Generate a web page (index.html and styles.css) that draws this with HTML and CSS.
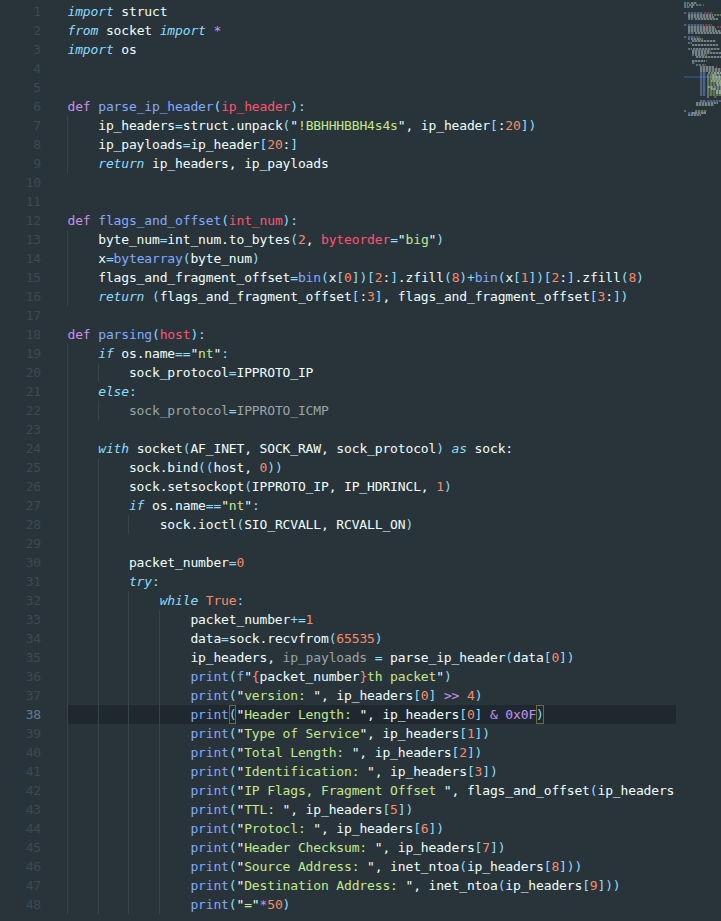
FILE: index.html
```html
<!DOCTYPE html>
<html lang="en">
<head>
<meta charset="utf-8">
<title>parser.py</title>
<link rel="stylesheet" href="styles.css">
</head>
<body>
<div class="editor">
<div class="lines">
<div class="line"><span class="num">1</span><div class="code"><span class="t"><span class="k">import</span> struct</span></div></div>
<div class="line"><span class="num">2</span><div class="code"><span class="t"><span class="k">from</span> socket <span class="k">import</span> <span class="d">*</span></span></div></div>
<div class="line"><span class="num">3</span><div class="code"><span class="t"><span class="k">import</span> os</span></div></div>
<div class="line"><span class="num">4</span><div class="code"></div></div>
<div class="line"><span class="num">5</span><div class="code"></div></div>
<div class="line"><span class="num">6</span><div class="code"><span class="t"><span class="d">def</span> <span class="f">parse_ip_header</span><span class="o">(</span><span class="r">ip_header</span><span class="o">):</span></span></div></div>
<div class="line"><span class="num">7</span><div class="code"><i class="g"></i><span class="t">ip_headers<span class="o">=</span>struct.unpack<span class="o">(</span>"<span class="s">!BBHHHBBH4s4s</span>", ip_header<span class="o">[</span>:<span class="n">20</span><span class="o">])</span></span></div></div>
<div class="line"><span class="num">8</span><div class="code"><i class="g"></i><span class="t">ip_payloads<span class="o">=</span>ip_header<span class="o">[</span><span class="n">20</span>:<span class="o">]</span></span></div></div>
<div class="line"><span class="num">9</span><div class="code"><i class="g"></i><span class="t"><span class="k">return</span> ip_headers, ip_payloads</span></div></div>
<div class="line"><span class="num">10</span><div class="code"></div></div>
<div class="line"><span class="num">11</span><div class="code"></div></div>
<div class="line"><span class="num">12</span><div class="code"><span class="t"><span class="d">def</span> <span class="f">flags_and_offset</span><span class="o">(</span><span class="r">int_num</span><span class="o">):</span></span></div></div>
<div class="line"><span class="num">13</span><div class="code"><i class="g"></i><span class="t">byte_num<span class="o">=</span>int_num.to_bytes<span class="o">(</span><span class="n">2</span>, <span class="r">byteorder</span><span class="o">=</span>"<span class="s">big</span>"<span class="o">)</span></span></div></div>
<div class="line"><span class="num">14</span><div class="code"><i class="g"></i><span class="t">x<span class="o">=</span><span class="f">bytearray</span><span class="o">(</span>byte_num<span class="o">)</span></span></div></div>
<div class="line"><span class="num">15</span><div class="code"><i class="g"></i><span class="t">flags_and_fragment_offset<span class="o">=</span><span class="f">bin</span><span class="o">(</span>x<span class="o">[</span><span class="n">0</span><span class="o">])[</span><span class="n">2</span>:<span class="o">]</span>.zfill<span class="o">(</span><span class="n">8</span><span class="o">)</span><span class="o">+</span><span class="f">bin</span><span class="o">(</span>x<span class="o">[</span><span class="n">1</span><span class="o">])[</span><span class="n">2</span>:<span class="o">]</span>.zfill<span class="o">(</span><span class="n">8</span><span class="o">)</span></span></div></div>
<div class="line"><span class="num">16</span><div class="code"><i class="g"></i><span class="t"><span class="k">return</span> <span class="o">(</span>flags_and_fragment_offset<span class="o">[</span>:<span class="n">3</span><span class="o">]</span>, flags_and_fragment_offset<span class="o">[</span><span class="n">3</span>:<span class="o">])</span></span></div></div>
<div class="line"><span class="num">17</span><div class="code"></div></div>
<div class="line"><span class="num">18</span><div class="code"><span class="t"><span class="d">def</span> <span class="f">parsing</span><span class="o">(</span><span class="r">host</span><span class="o">):</span></span></div></div>
<div class="line"><span class="num">19</span><div class="code"><i class="g"></i><span class="t"><span class="k">if</span> os.name<span class="o">==</span>"<span class="s">nt</span>"<span class="o">:</span></span></div></div>
<div class="line"><span class="num">20</span><div class="code"><i class="g"></i><i class="g"></i><span class="t">sock_protocol<span class="o">=</span>IPPROTO_IP</span></div></div>
<div class="line"><span class="num">21</span><div class="code"><i class="g"></i><span class="t"><span class="k">else</span><span class="o">:</span></span></div></div>
<div class="line"><span class="num">22</span><div class="code"><i class="g"></i><i class="g"></i><span class="t"><span class="u">sock_protocol</span><span class="o">=</span><span class="u">IPPROTO_ICMP</span></span></div></div>
<div class="line"><span class="num">23</span><div class="code"><i class="g"></i></div></div>
<div class="line"><span class="num">24</span><div class="code"><i class="g"></i><span class="t"><span class="k">with</span> socket<span class="o">(</span>AF_INET, SOCK_RAW, sock_protocol<span class="o">)</span> <span class="k">as</span> sock:</span></div></div>
<div class="line"><span class="num">25</span><div class="code"><i class="g"></i><i class="g"></i><span class="t">sock.bind<span class="o">((</span>host, <span class="n">0</span><span class="o">))</span></span></div></div>
<div class="line"><span class="num">26</span><div class="code"><i class="g"></i><i class="g"></i><span class="t">sock.setsockopt<span class="o">(</span>IPPROTO_IP, IP_HDRINCL, <span class="n">1</span><span class="o">)</span></span></div></div>
<div class="line"><span class="num">27</span><div class="code"><i class="g"></i><i class="g"></i><span class="t"><span class="k">if</span> os.name<span class="o">==</span>"<span class="s">nt</span>"<span class="o">:</span></span></div></div>
<div class="line"><span class="num">28</span><div class="code"><i class="g"></i><i class="g"></i><i class="g"></i><span class="t">sock.ioctl<span class="o">(</span>SIO_RCVALL, RCVALL_ON<span class="o">)</span></span></div></div>
<div class="line"><span class="num">29</span><div class="code"><i class="g"></i><i class="g"></i></div></div>
<div class="line"><span class="num">30</span><div class="code"><i class="g"></i><i class="g"></i><span class="t">packet_number<span class="o">=</span><span class="n">0</span></span></div></div>
<div class="line"><span class="num">31</span><div class="code"><i class="g"></i><i class="g"></i><span class="t"><span class="k">try</span><span class="o">:</span></span></div></div>
<div class="line"><span class="num">32</span><div class="code"><i class="g"></i><i class="g"></i><i class="g"></i><span class="t"><span class="k">while</span> <span class="n">True</span><span class="o">:</span></span></div></div>
<div class="line"><span class="num">33</span><div class="code"><i class="g"></i><i class="g"></i><i class="g"></i><i class="g"></i><span class="t">packet_number<span class="o">+=</span><span class="n">1</span></span></div></div>
<div class="line"><span class="num">34</span><div class="code"><i class="g"></i><i class="g"></i><i class="g"></i><i class="g"></i><span class="t">data<span class="o">=</span>sock.recvfrom<span class="o">(</span><span class="n">65535</span><span class="o">)</span></span></div></div>
<div class="line"><span class="num">35</span><div class="code"><i class="g"></i><i class="g"></i><i class="g"></i><i class="g"></i><span class="t">ip_headers, <span class="u">ip_payloads</span> <span class="o">=</span> parse_ip_header<span class="o">(</span>data<span class="o">[</span><span class="n">0</span><span class="o">])</span></span></div></div>
<div class="line"><span class="num">36</span><div class="code"><i class="g"></i><i class="g"></i><i class="g"></i><i class="g"></i><span class="t"><span class="f">print</span><span class="o">(</span><span class="f">f</span>"<span class="n">{</span>packet_number<span class="n">}</span><span class="s">th packet</span>"<span class="o">)</span></span></div></div>
<div class="line"><span class="num">37</span><div class="code"><i class="g"></i><i class="g"></i><i class="g"></i><i class="g"></i><span class="t"><span class="f">print</span><span class="o">(</span>"<span class="s">version: </span>", ip_headers<span class="o">[</span><span class="n">0</span><span class="o">]</span> <span class="d">&gt;&gt;</span> <span class="n">4</span><span class="o">)</span></span></div></div>
<div class="line active"><span class="num">38</span><div class="code"><i class="g"></i><i class="g"></i><i class="g"></i><i class="g"></i><span class="t"><span class="f">print</span><span class="m o">(</span>"<span class="s">Header Length: </span>", ip_headers<span class="o">[</span><span class="n">0</span><span class="o">]</span> <span class="d">&amp;</span> <span class="d">0x0F</span><span class="m o">)</span></span></div></div>
<div class="line"><span class="num">39</span><div class="code"><i class="g"></i><i class="g"></i><i class="g"></i><i class="g"></i><span class="t"><span class="f">print</span><span class="o">(</span>"<span class="s">Type of Service</span>", ip_headers<span class="o">[</span><span class="n">1</span><span class="o">])</span></span></div></div>
<div class="line"><span class="num">40</span><div class="code"><i class="g"></i><i class="g"></i><i class="g"></i><i class="g"></i><span class="t"><span class="f">print</span><span class="o">(</span>"<span class="s">Total Length: </span>", ip_headers<span class="o">[</span><span class="n">2</span><span class="o">])</span></span></div></div>
<div class="line"><span class="num">41</span><div class="code"><i class="g"></i><i class="g"></i><i class="g"></i><i class="g"></i><span class="t"><span class="f">print</span><span class="o">(</span>"<span class="s">Identification: </span>", ip_headers<span class="o">[</span><span class="n">3</span><span class="o">])</span></span></div></div>
<div class="line"><span class="num">42</span><div class="code"><i class="g"></i><i class="g"></i><i class="g"></i><i class="g"></i><span class="t"><span class="f">print</span><span class="o">(</span>"<span class="s">IP Flags, Fragment Offset </span>", flags_and_offset<span class="o">(</span>ip_headers</span></div></div>
<div class="line"><span class="num">43</span><div class="code"><i class="g"></i><i class="g"></i><i class="g"></i><i class="g"></i><span class="t"><span class="f">print</span><span class="o">(</span>"<span class="s">TTL: </span>", ip_headers<span class="o">[</span><span class="n">5</span><span class="o">])</span></span></div></div>
<div class="line"><span class="num">44</span><div class="code"><i class="g"></i><i class="g"></i><i class="g"></i><i class="g"></i><span class="t"><span class="f">print</span><span class="o">(</span>"<span class="s">Protocl: </span>", ip_headers<span class="o">[</span><span class="n">6</span><span class="o">])</span></span></div></div>
<div class="line"><span class="num">45</span><div class="code"><i class="g"></i><i class="g"></i><i class="g"></i><i class="g"></i><span class="t"><span class="f">print</span><span class="o">(</span>"<span class="s">Header Checksum: </span>", ip_headers<span class="o">[</span><span class="n">7</span><span class="o">])</span></span></div></div>
<div class="line"><span class="num">46</span><div class="code"><i class="g"></i><i class="g"></i><i class="g"></i><i class="g"></i><span class="t"><span class="f">print</span><span class="o">(</span>"<span class="s">Source Address: </span>", inet_ntoa<span class="o">(</span>ip_headers<span class="o">[</span><span class="n">8</span><span class="o">]))</span></span></div></div>
<div class="line"><span class="num">47</span><div class="code"><i class="g"></i><i class="g"></i><i class="g"></i><i class="g"></i><span class="t"><span class="f">print</span><span class="o">(</span>"<span class="s">Destination Address: </span>", inet_ntoa<span class="o">(</span>ip_headers<span class="o">[</span><span class="n">9</span><span class="o">]))</span></span></div></div>
<div class="line"><span class="num">48</span><div class="code"><i class="g"></i><i class="g"></i><i class="g"></i><i class="g"></i><span class="t"><span class="f">print</span><span class="o">(</span>"<span class="s">=</span>"<span class="d">*</span><span class="n">50</span><span class="o">)</span></span></div></div>
</div>
<svg class="minimap" viewBox="0 0 37 120" width="37" height="120" aria-hidden="true">
<rect class="mm-active" x="0" y="76" width="37" height="2"/>
<path class="mm-w" d="M7 3h6M5 5h6M7 7h2M4 15h25M4 17h26M11 19h23M4 27h26M4 29h28M4 31h33M11 33h26M7 39h8M8 41h24M8 45h26M9 49h27M8 51h18M8 53h29M11 55h8M12 57h25M8 61h13M16 67h14M16 69h21M16 71h21M24 73h13M28 75h9M28 77h9M28 79h9M27 81h10M32 83h5M33 85h4M24 87h13M27 89h10M32 91h5M32 93h5M12 103h22M12 105h18M8 113h14M4 115h13"/>
<path class="mm-k" d="M0 3h6M0 5h4M12 5h6M0 7h6M4 19h6M4 33h6M4 39h2M4 43h4M4 49h4M8 55h2M8 63h3M12 65h5M16 101h6M0 111h2"/>
<path class="mm-d" d="M19 5h1M0 13h3M0 25h3M0 37h3M35 101h2"/>
<path class="mm-f" d="M4 13h15M4 25h16M4 37h7M16 73h6M16 75h6M16 77h6M16 79h6M16 81h6M16 83h6M16 85h6M16 87h6M16 89h6M16 91h6M16 93h6M16 95h6M23 101h12M4 113h9"/>
<path class="mm-r" d="M20 13h9M21 25h7M12 37h4M33 27h4M20 29h2"/>
<path class="mm-s" d="M30 15h7M15 39h4M19 55h4M30 73h7M23 75h9M23 77h15M23 79h15M23 81h15M23 83h14M23 85h14M23 87h5M23 89h9M23 91h14M23 93h14M23 95h14M23 97h2M11 111h12"/>
<path class="mm-n" d="M30 27h1M26 51h1M22 61h1M18 65h4M32 67h1M30 97h3M18 113h4"/>
</svg>
</div>
</body>
</html>
```

FILE: styles.css
```css
html, body {
  margin: 0;
  height: 100%;
  overflow: hidden;
  background: #29343a;
}

.editor {
  display: flex;
  align-items: flex-start;
  height: 921px;
  padding-top: 2px;
  box-sizing: border-box;
  font-family: "DejaVu Sans Mono", "Liberation Mono", monospace;
  font-size: 13px;
  letter-spacing: -0.146px;
  line-height: 19px;
  color: #eeffff;
}

.lines {
  width: 676px;
  flex: none;
}

.line {
  display: flex;
  height: 19px;
}

.num {
  flex: none;
  width: 41px;
  margin-right: 26px;
  text-align: right;
  color: #3a4a52;
}

.code {
  flex: 1;
  min-width: 0;
  display: flex;
  overflow: hidden;
  white-space: pre;
}

.t {
  flex: none;
  margin-left: 0.5px;
}

.g {
  flex: none;
  width: 30.72px;
  height: 19px;
  box-shadow: inset 1px 0 0 #36454d;
}

.active .num {
  color: #5f7f92;
}

.active .code {
  background: #1f282e;
  box-shadow: inset 1px 0 0 #29343a;
}

.k { color: #89ddff; font-style: italic; }
.d { color: #c792ea; }
.f { color: #82aaff; }
.r { color: #ff5370; }
.s { color: #c3e88d; }
.n { color: #f78c6c; }
.o { color: #89ddff; }
.u { color: #9aa5a8; }

.m {
  display: inline-block;
  height: 19px;
  box-shadow: inset 0 0 0 1px #6e6a3c;
}

.minimap {
  flex: none;
  margin: -2px 0 0 8px;
  display: block;
}

.minimap path {
  fill: none;
  stroke-width: 1.3;
  stroke-dasharray: 2.4 0.6;
  opacity: 0.5;
}

.mm-active { fill: #2f4c66; }
.mm-w { stroke: #eeffff; }
.mm-k { stroke: #89ddff; }
.mm-d { stroke: #c792ea; }
.mm-f { stroke: #82aaff; }
.mm-r { stroke: #ff5370; }
.mm-s { stroke: #c3e88d; }
.mm-n { stroke: #f78c6c; }
```
